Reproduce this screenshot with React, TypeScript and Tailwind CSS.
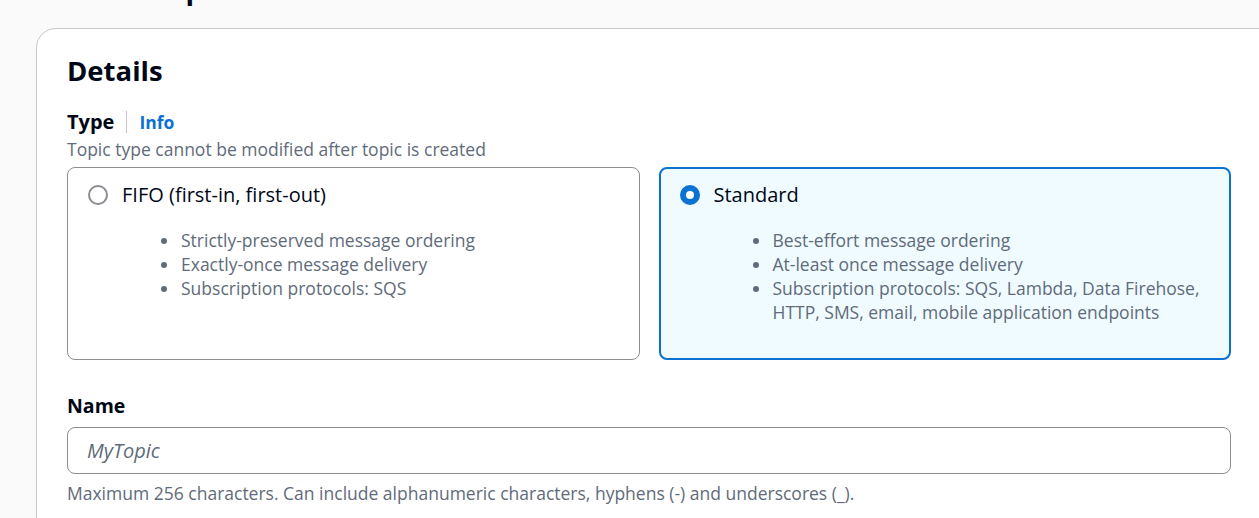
import React, { useState } from 'react';

const font = { fontFamily: '"Open Sans", "Noto Sans", Arial, sans-serif' };

type TileProps = {
    label: string;
    items: string[];
    selected: boolean;
    onSelect: () => void;
};

const Tile: React.FC<TileProps> = ({ label, items, selected, onSelect }) => (
    <div
        onClick={onSelect}
        className={
            selected
                ? 'h-[193px] rounded-lg border-2 border-[#0972d3] bg-[#f0fbff] pl-[19px] pt-[14px] cursor-pointer'
                : 'h-[193px] rounded-lg border border-[#8c8c94] bg-white pl-[20px] pt-[15px] cursor-pointer'
        }
    >
        <div className="flex items-center gap-[14px] h-[24px]">
            {selected ? (
                <span className="w-[20px] h-[20px] rounded-full border-[6px] border-[#0972d3] bg-white" />
            ) : (
                <span className="w-[20px] h-[20px] rounded-full border-2 border-[#8c8c94] bg-white" />
            )}
            <span className="text-[20px] text-[#000716]">{label}</span>
        </div>
        <ul className="list-disc mt-[21px] ml-[92px] pr-6 text-[17.5px] leading-[24px] text-[#5f6b7a] marker:text-[#5f6b7a]">
            {items.map((item, i) => (
                <li key={i} className="pl-[1px]">{item}</li>
            ))}
        </ul>
    </div>
);

const App: React.FC = () => {
    const [type, setType] = useState<'fifo' | 'standard'>('standard');
    const [name, setName] = useState('');

    return (
        <div className="h-screen overflow-hidden bg-[#fafafa] pl-[36px]" style={font}>
            <div className="h-[28px] overflow-hidden relative">
                <h1 className="absolute left-[20px] -top-[33px] text-[28px] font-bold text-[#000716]">Create topic</h1>
            </div>
            <div className="bg-white border border-[#c6c6cd] rounded-tl-[20px] -mr-6 pl-[30px] pt-[22px] pb-10">
                <h2 className="text-[27.5px] leading-[40px] font-bold text-[#000716]">Details</h2>

                <div className="w-[1164px] mt-[18px]">
                    <div className="flex items-center h-[26px]">
                        <span className="text-[20px] font-bold text-[#000716]">Type</span>
                        <span className="mx-[12px] h-[22px] border-l border-[#c6c6cd]" />
                        <a className="text-[17.5px] font-bold text-[#0972d3] cursor-pointer">Info</a>
                    </div>
                    <p className="mt-[2px] text-[17.5px] leading-[24px] text-[#5f6b7a]">Topic type cannot be modified after topic is created</p>

                    <div className="grid grid-cols-2 gap-[19px] mt-[6px]">
                        <Tile
                            label="FIFO (first-in, first-out)"
                            items={[
                                'Strictly-preserved message ordering',
                                'Exactly-once message delivery',
                                'Subscription protocols: SQS',
                            ]}
                            selected={type === 'fifo'}
                            onSelect={() => setType('fifo')}
                        />
                        <Tile
                            label="Standard"
                            items={[
                                'Best-effort message ordering',
                                'At-least once message delivery',
                                'Subscription protocols: SQS, Lambda, Data Firehose, HTTP, SMS, email, mobile application endpoints',
                            ]}
                            selected={type === 'standard'}
                            onSelect={() => setType('standard')}
                        />
                    </div>

                    <div className="mt-[32px]">
                        <label className="block text-[19.5px] leading-[28px] font-bold text-[#000716]">Name</label>
                        <input
                            value={name}
                            onChange={e => setName(e.target.value)}
                            placeholder="MyTopic"
                            className="mt-[7px] w-full h-[47px] rounded-lg border border-[#8c8c94] bg-white px-[19px] text-[20px] text-[#000716] outline-none placeholder:italic placeholder:text-[#5f6b7a]"
                        />
                        <p className="mt-[7px] text-[17.5px] leading-[24px] text-[#5f6b7a]">
                            Maximum 256 characters. Can include alphanumeric characters, hyphens (-) and underscores (_).
                        </p>
                    </div>
                </div>
            </div>
        </div>
    );
};

export default App;
